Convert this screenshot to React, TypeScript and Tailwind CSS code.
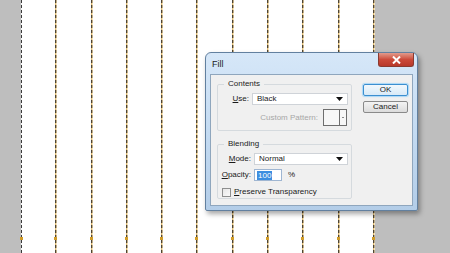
import React from "react";

const lines = Array.from({ length: 11 }, (_, i) => i);

function SelectBox({ value, width }: { value: string; width: string }) {
  return (
    <div className={`${width} h-[12px] bg-white border border-[#cfd3d8] flex items-center justify-between pl-[4px] pr-[4px]`}>
      <span className="leading-none text-[#1a1a1a]">{value}</span>
      <svg width="7" height="4" viewBox="0 0 7 4">
        <path d="M0 0h7L3.5 4z" fill="#111" />
      </svg>
    </div>
  );
}

export default function App() {
  return (
    <div className="relative w-[450px] h-[253px] bg-[#bebebe] overflow-hidden [font-family:'Liberation_Sans',Arial,sans-serif] text-[8px]">
      {/* canvas with selection columns */}
      <div className="flex h-full">
        <div className="w-[21px]" />
        <div className="w-[354px] h-full bg-white flex justify-between">
          {lines.map((i) => (
            <div
              key={i}
              className={
                i === 0
                  ? "relative w-[1px] h-full bg-[repeating-linear-gradient(to_bottom,#3a3a3a_0px,#3a3a3a_3px,#f4f4f4_3px,#f4f4f4_5px)]"
                  : "relative w-[2px] h-full flex"
              }
            >
              {i !== 0 && (
                <>
                  <div className="w-[1px] h-full bg-[repeating-linear-gradient(to_bottom,#4d4535_0px,#4d4535_3px,#deb86e_3px,#deb86e_5px)]" />
                  <div className="w-[1px] h-full bg-[repeating-linear-gradient(to_bottom,#c2ae88_0px,#c2ae88_3px,#f3e6c8_3px,#f3e6c8_5px)]" />
                </>
              )}
              <div className="absolute left-[-1px] top-[237px] w-[3px] h-[3px] bg-[#d19c28]" />
            </div>
          ))}
        </div>
      </div>

      {/* Fill dialog */}
      <div className="absolute left-[205px] top-[52px] w-[213px] h-[159px] rounded-t-[6px] rounded-b-[2px] border border-[#62809f] bg-gradient-to-b from-[#d6e7f8] via-[#c4dbf2] to-[#b3cde8] shadow-[2px_3px_5px_rgba(0,0,0,0.35)] flex flex-col px-[4px] pb-[4px]">
        <div className="h-[21px] flex justify-between">
          <span className="self-center pl-[2px] pt-[2px] text-[9px] text-[#1b1b1b]">Fill</span>
          <div className="-mr-[1px] w-[36px] h-[14px] rounded-b-[3px] border border-[#8a3a30] border-t-0 bg-gradient-to-b from-[#e19a8c] via-[#cc4a3a] to-[#b8392b] flex items-center justify-center">
            <svg width="9" height="8" viewBox="0 0 9 8">
              <path d="M1 0.5L8 7.5M8 0.5L1 7.5" stroke="#fff" strokeWidth="2" />
            </svg>
          </div>
        </div>

        <div className="flex-1 bg-[#f0f0f0] border border-[#8fa6bd] flex pl-[6px] pt-[4px] text-[#1a1a1a]">
          <div className="flex flex-col gap-[8px]">
            <fieldset className="w-[135px] h-[52px] border border-[#d5dade] rounded-[2px]">
              <legend className="ml-[6px] px-[4px] leading-[10px] text-[#222]">Contents</legend>
              <div className="flex flex-col pt-[4px]">
                <div className="flex items-center">
                  <span className="w-[31px] text-right">
                    <span className="underline">U</span>se:
                  </span>
                  <div className="ml-[3px]">
                    <SelectBox value="Black" width="w-[96px]" />
                  </div>
                </div>
                <div className="flex items-center mt-[4px]">
                  <span className="w-[100px] text-right text-[#a7a7a7]">Custom Pattern:</span>
                  <div className="ml-[5px] w-[24px] h-[17px] border border-[#6e6e6e] bg-[#f7f7f7] flex">
                    <div className="flex-1" />
                    <div className="w-[7px] border-l border-[#6e6e6e] flex items-center justify-center">
                      <div className="w-[2px] h-[1px] bg-[#8a8a8a]" />
                    </div>
                  </div>
                </div>
              </div>
            </fieldset>

            <fieldset className="w-[135px] h-[60px] border border-[#d5dade] rounded-[2px]">
              <legend className="ml-[6px] px-[4px] leading-[10px] text-[#222]">Blending</legend>
              <div className="flex flex-col pt-[4px]">
                <div className="flex items-center">
                  <span className="w-[33px] text-right">
                    <span className="underline">M</span>ode:
                  </span>
                  <div className="ml-[3px]">
                    <SelectBox value="Normal" width="w-[94px]" />
                  </div>
                </div>
                <div className="flex items-center mt-[4px]">
                  <span className="w-[33px] text-right">
                    <span className="underline">O</span>pacity:
                  </span>
                  <div className="ml-[3px] w-[28px] h-[12px] bg-white border border-[#9fb6d2] flex items-center pl-[2px]">
                    <span className="bg-[#3d8ee0] text-white leading-[9px] px-[1px]">100</span>
                  </div>
                  <span className="ml-[6px]">%</span>
                </div>
                <div className="flex items-center mt-[5px] pl-[4px]">
                  <div className="w-[9px] h-[9px] border border-[#8e8f8f] bg-gradient-to-br from-[#e6e6e6] to-[#fafafa]" />
                  <span className="ml-[3px]">
                    <span className="underline">P</span>reserve Transparency
                  </span>
                </div>
              </div>
            </fieldset>
          </div>

          <div className="ml-[11px] pt-[5px] flex flex-col gap-[5px]">
            <div className="w-[45px] h-[12px] rounded-[2px] border border-[#3c8fd0] shadow-[0_0_1px_1px_#a9d8f7] bg-gradient-to-b from-[#f2f8fc] to-[#d8eaf7] flex items-center justify-center leading-none">
              OK
            </div>
            <div className="w-[45px] h-[12px] rounded-[2px] border border-[#8a8a8a] bg-gradient-to-b from-[#f4f4f4] to-[#dcdcdc] flex items-center justify-center leading-none">
              Cancel
            </div>
          </div>
        </div>
      </div>
    </div>
  );
}
